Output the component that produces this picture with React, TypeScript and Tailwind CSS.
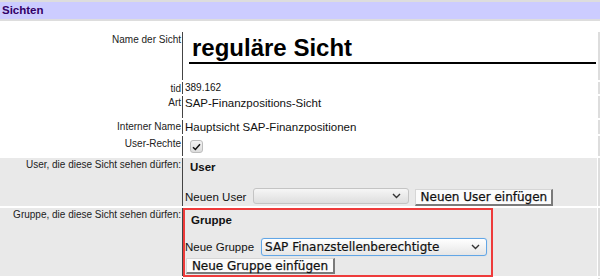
import React from "react";

const Chevron = () => (
  <svg width="9" height="6" viewBox="0 0 9 6" className="shrink-0">
    <path d="M1 1l3.5 3.5L8 1" fill="none" stroke="#333" strokeWidth="1.4" />
  </svg>
);

function Row({
  label,
  children,
  rowClass,
  labelClass,
  valueClass,
}: {
  label: string;
  children?: React.ReactNode;
  rowClass: string;
  labelClass?: string;
  valueClass?: string;
}) {
  return (
    <div className={"flex " + rowClass}>
      <div
        className={
          "w-[183px] shrink-0 border-r border-[#444] pr-[1px] text-right text-[10px] leading-[14px] text-[#222] " +
          (labelClass ?? "")
        }
      >
        {label}
      </div>
      <div className={"min-w-0 flex-1 " + (valueClass ?? "")}>{children}</div>
      <div className="ml-[1px] w-[2px] shrink-0 bg-[#dddddd]" />
    </div>
  );
}

export default function App() {
  return (
    <div className="h-[279px] w-[600px] overflow-hidden bg-white font-['Liberation_Sans',Arial,sans-serif] text-[#111]">
      <div className="h-[21px] border-y-2 border-[#dddddd] bg-[#ccccff] px-[2px] text-[11.5px] font-bold leading-[17px] text-[#330066]">
        Sichten
      </div>

      <div className="mt-[11px] flex flex-col gap-[2px]">
        <Row label="Name der Sicht" rowClass="h-[48px]" labelClass="pt-[1px]">
          <input
            readOnly
            value="reguläre Sicht"
            className="mt-[2px] ml-[6px] block h-[30px] w-[407px] border-b-2 border-black bg-transparent px-[3px] text-[24px] font-bold leading-[28px] text-black outline-none"
          />
        </Row>

        <Row label="tid" rowClass="h-[12px]" labelClass="leading-[12px]" valueClass="pl-[2px] text-[10px] leading-[12px]">
          389.162
        </Row>

        <Row label="Art" rowClass="h-[22px]" valueClass="pl-[2px] text-[11.5px] leading-[14px]">
          SAP-Finanzpositions-Sicht
        </Row>

        <Row label="Interner Name" rowClass="h-[14px]" valueClass="pl-[2px] text-[11.5px] leading-[14px]">
          Hauptsicht SAP-Finanzpositionen
        </Row>

        <Row label="User-Rechte" rowClass="h-[20px]" labelClass="pt-[1px]" valueClass="pl-[7px] pt-[4px]">
          <div className="flex h-[13px] w-[13px] items-center justify-center rounded-[3px] border border-[#bdbdbd] bg-linear-to-b from-[#f4f4f4] to-[#dcdcdc]">
            <svg width="9" height="8" viewBox="0 0 9 8">
              <path d="M1 4.2l2.4 2.3L8 1.3" fill="none" stroke="#111" strokeWidth="1.5" />
            </svg>
          </div>
        </Row>

        <Row
          label="User, die diese Sicht sehen dürfen:"
          rowClass="h-[48px]"
          labelClass="bg-[#e9e9e9]"
          valueClass="flex flex-col bg-[#e9e9e9]"
        >
          <div className="pl-[7px] pt-[2px] text-[11.5px] font-bold leading-[14px]">User</div>
          <div className="mt-auto flex items-end pl-[2px]">
            <span className="mb-[2px] text-[11.5px] leading-[14px]">Neuen User</span>
            <div className="mb-[2px] ml-[7px] flex h-[16px] w-[156px] items-center justify-end rounded-[3px] border border-[#c4c4c4] bg-linear-to-b from-[#f6f6f6] to-[#dedede] pr-[7px]">
              <Chevron />
            </div>
            <button className="ml-[6px] h-[17px] w-[138px] whitespace-nowrap border border-[#d6d6d6] border-r-2 border-b-2 border-r-[#7a7a7a] border-b-[#7a7a7a] bg-[#fbfbfb] font-['DejaVu_Sans',sans-serif] text-[12px] leading-[13px] text-[#111] [-webkit-text-stroke:0.25px_#111]">
              Neuen User einfügen
            </button>
          </div>
        </Row>

        <Row
          label="Gruppe, die diese Sicht sehen dürfen:"
          rowClass="h-[68px]"
          labelClass="bg-[#e9e9e9]"
          valueClass="bg-[#e9e9e9]"
        >
          <div className="flex h-[69px] w-[310px] flex-col border-2 border-[#ee3b3b]">
            <div className="pl-[6px] pt-[3px] text-[11.5px] font-bold leading-[14px]">Gruppe</div>
            <div className="mt-auto flex items-center">
              <span className="text-[11.5px] leading-[14px]">Neue Gruppe</span>
              <div className="ml-[7px] flex h-[18px] w-[226px] items-center justify-between rounded-[3px] border border-[#62a6e6] bg-linear-to-b from-[#ffffff] to-[#e6e6e6] pl-[3px] pr-[6px] shadow-[0_0_1px_#9ccaf2]">
                <span className="font-['DejaVu_Sans',sans-serif] text-[12px] leading-[14px] text-[#111] [-webkit-text-stroke:0.2px_#111]">
                  SAP Finanzstellenberechtigte
                </span>
                <Chevron />
              </div>
            </div>
            <button className="mt-[2px] mb-[1px] ml-[1px] h-[16px] w-[149px] whitespace-nowrap border border-[#d6d6d6] border-r-2 border-b-2 border-r-[#7a7a7a] border-b-[#7a7a7a] bg-[#fbfbfb] font-['DejaVu_Sans',sans-serif] text-[12px] leading-[12px] text-[#111] [-webkit-text-stroke:0.25px_#111]">
              Neue Gruppe einfügen
            </button>
          </div>
        </Row>

        <Row label="" rowClass="h-[20px]" />
      </div>
    </div>
  );
}
